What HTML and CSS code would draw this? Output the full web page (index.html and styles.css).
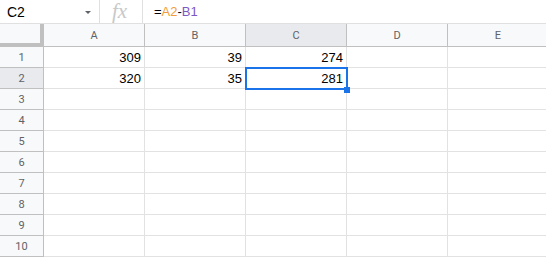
FILE: index.html
```html
<!DOCTYPE html>
<html lang="en">

<head>
    <meta charset="UTF-8">
    <meta name="viewport" content="width=device-width, initial-scale=1.0">
    <title>Sheet</title>
    <link rel="stylesheet" href="styles.css">
</head>

<body>
    <div class="formula-bar">
        <div class="name-box">
            <span>C2</span>
            <span class="caret"></span>
        </div>
        <div class="fx">fx</div>
        <div class="formula">=<span class="ref-a">A2</span>-<span class="ref-b">B1</span></div>
    </div>

    <div class="sheet">
        <div class="corner"></div>
        <div class="col-head">A</div>
        <div class="col-head">B</div>
        <div class="col-head active">C</div>
        <div class="col-head">D</div>
        <div class="col-head">E</div>

        <div class="row-head">1</div>
        <div class="cell">309</div>
        <div class="cell">39</div>
        <div class="cell">274</div>
        <div class="cell"></div>
        <div class="cell"></div>

        <div class="row-head active">2</div>
        <div class="cell">320</div>
        <div class="cell">35</div>
        <div class="cell selected">281</div>
        <div class="cell"></div>
        <div class="cell"></div>

        <div class="row-head">3</div>
        <div class="cell"></div><div class="cell"></div><div class="cell"></div><div class="cell"></div><div class="cell"></div>
        <div class="row-head">4</div>
        <div class="cell"></div><div class="cell"></div><div class="cell"></div><div class="cell"></div><div class="cell"></div>
        <div class="row-head">5</div>
        <div class="cell"></div><div class="cell"></div><div class="cell"></div><div class="cell"></div><div class="cell"></div>
        <div class="row-head">6</div>
        <div class="cell"></div><div class="cell"></div><div class="cell"></div><div class="cell"></div><div class="cell"></div>
        <div class="row-head">7</div>
        <div class="cell"></div><div class="cell"></div><div class="cell"></div><div class="cell"></div><div class="cell"></div>
        <div class="row-head">8</div>
        <div class="cell"></div><div class="cell"></div><div class="cell"></div><div class="cell"></div><div class="cell"></div>
        <div class="row-head">9</div>
        <div class="cell"></div><div class="cell"></div><div class="cell"></div><div class="cell"></div><div class="cell"></div>
        <div class="row-head">10</div>
        <div class="cell"></div><div class="cell"></div><div class="cell"></div><div class="cell"></div><div class="cell"></div>
    </div>
</body>

</html>
```

FILE: styles.css
```css
body {
    margin: 0;
    width: 546px;
    height: 257px;
    overflow: hidden;
    background-color: #fff;
    font-family: "Liberation Sans", Arial, sans-serif;
}

.formula-bar {
    display: flex;
    height: 23px;
    border-bottom: 1px solid #e0e0e0;
    font-size: 13px;
    color: #000;
}

.name-box {
    width: 100px;
    box-sizing: border-box;
    display: flex;
    align-items: center;
    justify-content: space-between;
    padding: 0 8px 0 7px;
    border-right: 1px solid #e0e0e0;
    font-size: 14px;
}

.caret {
    width: 0;
    height: 0;
    border-left: 3px solid transparent;
    border-right: 3px solid transparent;
    border-top: 3px solid #5f6368;
    margin-top: 2px;
}

.fx {
    width: 43px;
    box-sizing: border-box;
    border-right: 1px solid #e0e0e0;
    padding-left: 12px;
    font-family: "Liberation Serif", "Times New Roman", serif;
    font-style: italic;
    font-size: 21px;
    line-height: 23px;
    color: #c8c8c8;
}

.formula {
    padding-left: 11px;
    line-height: 23px;
}

.ref-a {
    color: #f29d38;
}

.ref-b {
    color: #7e57c2;
}

.sheet {
    display: grid;
    grid-template-columns: 44px repeat(5, 101px);
    grid-template-rows: 23px repeat(10, 21px);
}

.corner {
    box-sizing: border-box;
    background-color: #f8f9fa;
    border-right: 4px solid #c0c0c0;
    border-bottom: 4px solid #c0c0c0;
}

.col-head,
.row-head {
    box-sizing: border-box;
    background-color: #f8f9fa;
    color: #5f6368;
    font-family: Roboto, "Liberation Sans", sans-serif;
    font-size: 11px;
    display: flex;
    align-items: center;
    justify-content: center;
    border-right: 1px solid #c0c0c0;
    border-bottom: 1px solid #c0c0c0;
}

.col-head.active,
.row-head.active {
    background-color: #e8eaed;
}

.cell {
    box-sizing: border-box;
    border-right: 1px solid #e2e2e2;
    border-bottom: 1px solid #e2e2e2;
    text-align: right;
    padding: 3px 3px 0 0;
    font-size: 13px;
    line-height: 16px;
    color: #000;
}

.cell.selected {
    position: relative;
}

.cell.selected::after {
    content: "";
    position: absolute;
    top: -1px;
    left: -1px;
    right: -2px;
    bottom: -2px;
    border: 2px solid #1a73e8;
}

.cell.selected::before {
    content: "";
    position: absolute;
    right: -4px;
    bottom: -5px;
    width: 6px;
    height: 6px;
    background-color: #1a73e8;
    z-index: 1;
}
```
